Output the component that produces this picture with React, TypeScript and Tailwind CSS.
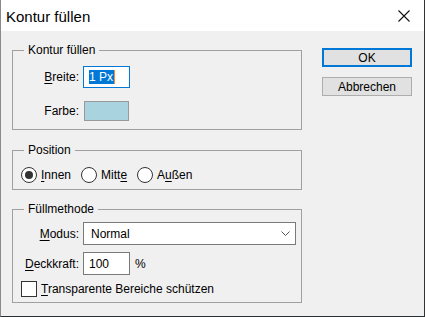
import React from "react";

const Key: React.FC<{ children: React.ReactNode }> = ({ children }) => (
  <span className="underline underline-offset-[2px] decoration-[1px]">{children}</span>
);

const Group: React.FC<{
  title: string;
  className?: string;
  children: React.ReactNode;
}> = ({ title, className = "", children }) => (
  <div className={`relative border border-[#a0a0a0] ${className}`}>
    <span className="absolute left-[11px] top-[-8px] bg-[#f0f0f0] px-[4px] leading-[14px]">
      {title}
    </span>
    {children}
  </div>
);

const Radio: React.FC<{ checked?: boolean; children: React.ReactNode }> = ({
  checked,
  children,
}) => (
  <div className="flex items-center gap-[4px]">
    <div className="w-[16px] h-[16px] rounded-full border border-[#333] bg-white flex items-center justify-center">
      {checked && <div className="w-[8px] h-[8px] rounded-full bg-[#333]"></div>}
    </div>
    <span>{children}</span>
  </div>
);

export default function App() {
  return (
    <div className="w-[425px] h-[317px] bg-[#f0f0f0] border-l border-r border-b border-l-[#8a8a8a] border-r-[#333] border-b-[#2a2f33] font-['Liberation_Sans',Arial,sans-serif] text-[12px] text-black flex flex-col">
      {/* title bar */}
      <div className="h-[31px] bg-white flex items-center justify-between pl-[5px] pr-[14px]">
        <span className="text-[15px] leading-[17px] pt-[2px]">Kontur füllen</span>
        <svg width="12" height="12" viewBox="0 0 12 12" className="mt-[1px]">
          <path d="M0.5 0.5 L11.5 11.5 M11.5 0.5 L0.5 11.5" stroke="#111" strokeWidth="1.1" fill="none" />
        </svg>
      </div>

      <div className="flex items-start pl-[11px]">
        {/* left column */}
        <div className="w-[290px] pt-[19px]">
          <Group title="Kontur füllen" className="pt-[15px] pb-[8px]">
            <div className="flex items-center h-[22px]">
              <span className="w-[66px] text-right">
                <Key>B</Key>reite:
              </span>
              <div className="ml-[4px] w-[47px] h-[22px] bg-white border border-[#0078d7] flex items-center pl-[5px]">
                <span className="bg-[#0078d7] text-white leading-[14px] pr-[1px]">1 Px</span>
                <span className="w-[1px] h-[14px] bg-[#ff8a28]"></span>
              </div>
            </div>
            <div className="flex items-center h-[20px] mt-[13px]">
              <span className="w-[66px] text-right">Farbe:</span>
              <div className="ml-[5px] w-[45px] h-[20px] bg-[#aad3e0] border border-[#999]"></div>
            </div>
          </Group>

          <Group title="Position" className="mt-[20px] pt-[16px] pb-[6px] pl-[8px]">
            <div className="flex items-center h-[16px] gap-[10px]">
              <Radio checked>
                <Key>I</Key>nnen
              </Radio>
              <Radio>
                Mitt<Key>e</Key>
              </Radio>
              <Radio>
                A<Key>u</Key>ßen
              </Radio>
            </div>
          </Group>

          <Group title="Füllmethode" className="mt-[19px] pt-[12px] pb-[5px]">
            <div className="flex items-center h-[23px]">
              <span className="w-[66px] text-right">
                <Key>M</Key>odus:
              </span>
              <div className="ml-[4px] w-[213px] h-[23px] bg-white border border-[#7a7a7a] flex items-center justify-between pl-[7px] pr-[5px]">
                <span>Normal</span>
                <svg width="9" height="5" viewBox="0 0 9 5">
                  <path d="M0.5 0.5 L4.5 4.5 L8.5 0.5" stroke="#555" strokeWidth="1" fill="none" />
                </svg>
              </div>
            </div>
            <div className="flex items-center h-[23px] mt-[7px]">
              <span className="w-[66px] text-right">
                <Key>D</Key>eckkraft:
              </span>
              <div className="ml-[4px] w-[47px] h-[23px] bg-white border border-[#7a7a7a] flex items-center pl-[5px]">
                100
              </div>
              <span className="ml-[5px]">%</span>
            </div>
            <div className="flex items-center h-[16px] mt-[6px] pl-[8px] gap-[4px]">
              <div className="w-[16px] h-[16px] border border-[#333] bg-white"></div>
              <span>
                <Key>T</Key>ransparente Bereiche schützen
              </span>
            </div>
          </Group>
        </div>

        {/* buttons */}
        <div className="ml-[20px] pt-[17px] flex flex-col gap-[10px]">
          <button className="w-[90px] h-[19px] border-2 border-[#0078d7] bg-[#e1e1e1] flex items-center justify-center leading-[14px]">
            OK
          </button>
          <button className="w-[90px] h-[19px] border border-[#adadad] bg-[#e1e1e1] flex items-center justify-center leading-[14px]">
            Abbrechen
          </button>
        </div>
      </div>
    </div>
  );
}
